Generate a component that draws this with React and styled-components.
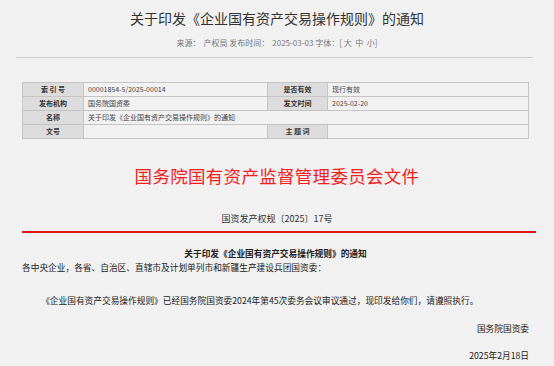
import React from 'react';
import styled, { createGlobalStyle } from 'styled-components';

const GlobalStyle = createGlobalStyle`
    html, body {
        margin: 0;
        padding: 0;
        background: #f1f1f1;
    }
    body {
        font-family: "Noto Sans CJK SC", "Liberation Sans", sans-serif;
        color: #333;
    }
`;

const Page = styled.div`
    width: 554px;
    height: 366px;
    overflow: hidden;
    background: #f1f1f1;
`;
const Title = styled.div`
    padding-top: 8px;
    font-size: 14px;
    line-height: 20px;
    text-align: center;
    color: #333;
`;
const Meta = styled.div`
    margin-top: 9px;
    font-size: 8px;
    line-height: 12px;
    text-align: center;
    color: #777;
    span {
        margin-left: 3px;
    }
`;
const Divider = styled.div`
    margin: 8px 21px 0 16px;
    border-top: 1px solid #cfcfcf;
`;
const InfoTable = styled.table`
    margin: 24px 0 0 22px;
    width: 506px;
    border-collapse: collapse;
    table-layout: fixed;
    font-size: 7px;
    border: 1px solid #c4c4c4;
    td {
        height: 13px;
        padding: 0 4px;
        border: 1px solid #c4c4c4;
        line-height: 13px;
        white-space: nowrap;
        overflow: hidden;
    }
`;
const Label = styled.td`
    background: #dcdcdc;
    font-weight: bold;
    text-align: center;
    color: #333;
`;
const Value = styled.td`
    background: #f1f1f1;
    color: #444;
`;
const Heading = styled.div`
    margin-top: 25px;
    font-size: 17.5px;
    line-height: 24px;
    text-align: center;
    color: #f21e1e;
    letter-spacing: 0.3px;
`;
const DocNo = styled.div`
    margin-top: 24px;
    font-size: 9px;
    line-height: 14px;
    text-align: center;
`;
const RedLine = styled.div`
    margin: 5px 18px 0 22px;
    height: 2px;
    background: #e8151b;
`;
const Article = styled.div`
    padding: 0 25px 0 22px;
    font-size: 8.7px;
    color: #222;
`;
const ArticleTitle = styled.div`
    margin-top: 14px;
    line-height: 13px;
    font-weight: bold;
    text-align: center;
`;
const Para = styled.p`
    margin: ${props => props.gap}px 0 0;
    line-height: 14px;
    text-indent: ${props => (props.indent ? '2.2em' : '0')};
    text-align: ${props => (props.right ? 'right' : 'left')};
    white-space: nowrap;
`;

const rows = [
    ['索 引 号', '00001854-5/2025-00014', '是否有效', '现行有效'],
    ['发布机构', '国务院国资委', '发文时间', '2025-02-20'],
];

const App = () => (
    <Page>
        <GlobalStyle />
        <Title>关于印发《企业国有资产交易操作规则》的通知</Title>
        <Meta>
            来源：<span>产权局</span> 发布时间：<span>2025-03-03</span> 字体：[ 大&nbsp; 中&nbsp; 小]
        </Meta>
        <Divider />
        <InfoTable>
            <colgroup>
                <col style={{ width: 61 }} />
                <col style={{ width: 184 }} />
                <col style={{ width: 60 }} />
                <col style={{ width: 201 }} />
            </colgroup>
            <tbody>
                {rows.map(([l1, v1, l2, v2]) => (
                    <tr key={l1}>
                        <Label>{l1}</Label>
                        <Value>{v1}</Value>
                        <Label>{l2}</Label>
                        <Value>{v2}</Value>
                    </tr>
                ))}
                <tr>
                    <Label>名称</Label>
                    <Value colSpan={3}>关于印发《企业国有资产交易操作规则》的通知</Value>
                </tr>
                <tr>
                    <Label>文号</Label>
                    <Value></Value>
                    <Label>主 题 词</Label>
                    <Value></Value>
                </tr>
            </tbody>
        </InfoTable>
        <Heading>国务院国有资产监督管理委员会文件</Heading>
        <DocNo>国资发产权规〔2025〕17号</DocNo>
        <RedLine />
        <Article>
            <ArticleTitle>关于印发《企业国有资产交易操作规则》的通知</ArticleTitle>
            <Para gap={1}>各中央企业，各省、自治区、直辖市及计划单列市和新疆生产建设兵团国资委：</Para>
            <Para gap={19} indent>
                《企业国有资产交易操作规则》已经国务院国资委2024年第45次委务会议审议通过，现印发给你们，请遵照执行。
            </Para>
            <Para gap={14} right>国务院国资委</Para>
            <Para gap={13} right>2025年2月18日</Para>
        </Article>
    </Page>
);

export default App;
